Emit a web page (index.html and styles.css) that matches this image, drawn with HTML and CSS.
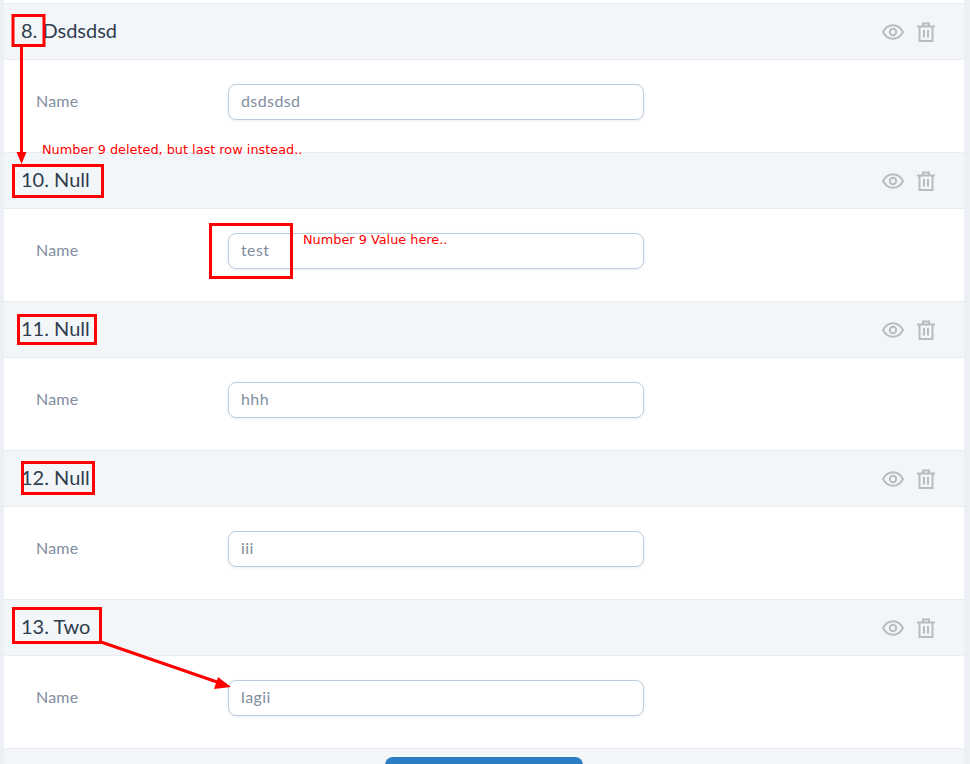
FILE: index.html
```html
<!DOCTYPE html>
<html lang="en">
<head>
<meta charset="utf-8">
<title>Rows</title>
<link rel="stylesheet" href="styles.css">
</head>
<body>
<svg width="0" height="0" class="defs">
  <symbol id="eye" viewBox="0 0 22 16"><path d="M1 8C3.500 3.400 7 1.200 11 1.200S18.500 3.400 21 8c-2.500 4.600-6 6.800-10 6.800S3.500 12.600 1 8Z" fill="none" stroke="currentColor" stroke-width="2" stroke-linejoin="round"/><circle cx="11" cy="8" r="3.200" fill="none" stroke="currentColor" stroke-width="2"/></symbol>
  <symbol id="trash" viewBox="0 0 20 20"><path d="M1 4.500h18M7 4.500V1.500h6v3M3.500 4.500V19h13V4.500M8 8v7.500M12 8v7.500" fill="none" stroke="currentColor" stroke-width="2"/></symbol>
</svg>
<main class="panel">
  <section class="row">
    <header class="row-head"><h2>8. Dsdsdsd</h2><div class="actions"><svg class="eye"><use href="#eye"/></svg><svg class="trash"><use href="#trash"/></svg></div></header>
    <div class="row-body"><label>Name</label><div class="input">dsdsdsd</div></div>
  </section>
  <section class="row">
    <header class="row-head"><h2>10. Null</h2><div class="actions"><svg class="eye"><use href="#eye"/></svg><svg class="trash"><use href="#trash"/></svg></div></header>
    <div class="row-body"><label>Name</label><div class="input">test</div></div>
  </section>
  <section class="row">
    <header class="row-head"><h2>11. Null</h2><div class="actions"><svg class="eye"><use href="#eye"/></svg><svg class="trash"><use href="#trash"/></svg></div></header>
    <div class="row-body"><label>Name</label><div class="input">hhh</div></div>
  </section>
  <section class="row">
    <header class="row-head"><h2>12. Null</h2><div class="actions"><svg class="eye"><use href="#eye"/></svg><svg class="trash"><use href="#trash"/></svg></div></header>
    <div class="row-body"><label>Name</label><div class="input">iii</div></div>
  </section>
  <section class="row">
    <header class="row-head"><h2>13. Two</h2><div class="actions"><svg class="eye"><use href="#eye"/></svg><svg class="trash"><use href="#trash"/></svg></div></header>
    <div class="row-body"><label>Name</label><div class="input">lagii</div></div>
  </section>
  <footer class="foot"><button class="save" type="button"></button></footer>
</main>
<svg class="marks" width="970" height="764" viewBox="0 0 970 764">
  <g fill="none" stroke="#f00" stroke-width="3">
    <rect x="13" y="15.500" width="31" height="30"/>
    <rect x="13.500" y="165.500" width="89" height="31"/>
    <rect x="210.500" y="224.500" width="81" height="53"/>
    <rect x="18.500" y="315.500" width="77" height="28"/>
    <rect x="22.500" y="462.500" width="71" height="31"/>
    <rect x="13.500" y="608.500" width="87" height="34"/>
    <path d="M21.500 46V154M101 642L220 683"/>
  </g>
  <path d="M16.500 152h10l-5 12ZM231 687l-13 -10l-4 12Z" fill="#f00"/>
</svg>
<p class="note note-a">Number 9 deleted, but last row instead..</p>
<p class="note note-b">Number 9 Value here..</p>
</body>
</html>
```
FILE: styles.css
```css
html, body { margin: 0; padding: 0; }
body { width: 970px; height: 764px; overflow: hidden; background: #ecf0f4; font-family: "Lato", "Open Sans", sans-serif; position: relative; }
.defs { position: absolute; }
.panel { margin-left: 4px; width: 960px; height: 764px; padding-top: 3px; background: #fff; box-sizing: border-box; overflow: hidden; }
.row-head { height: 57px; box-sizing: border-box; background: #f3f6f9; border-top: 1px solid #e9edf2; border-bottom: 1px solid #e9edf2; display: flex; align-items: center; justify-content: space-between; padding: 0 28px 0 17px; }
.row-head h2 { margin: 0 0 3px; font-size: 20px; line-height: 24px; font-weight: 400; color: #2f3d4e; }
.actions { display: flex; align-items: center; gap: 12px; color: #b8bbc0; }
.eye { width: 22px; height: 16px; }
.trash { width: 20px; height: 20px; }
.row-body { height: 92px; box-sizing: border-box; display: flex; align-items: flex-start; padding: 24px 0 0 32px; }
.row-body label { width: 192px; font-size: 16px; line-height: 34px; letter-spacing: .2px; color: #828e9f; }
.input { width: 416px; height: 36px; box-sizing: border-box; border: 1px solid #bccbda; border-radius: 8px; padding-left: 12px; font-size: 16px; line-height: 32px; letter-spacing: .4px; color: #828e9f; box-shadow: 0 1px 3px rgba(60,80,110,.1); }
.foot { background: #f3f6f9; border-top: 1px solid #e9edf2; height: 20px; display: flex; justify-content: center; padding-top: 8px; }
.save { width: 198px; height: 20px; padding: 0; border: 0; background: #2a7dc0; border-radius: 8px; }
.marks { position: absolute; left: 0; top: 0; pointer-events: none; }
.note { position: absolute; margin: 0; color: #f00; font-family: "DejaVu Sans", sans-serif; font-size: 12.850px; line-height: 14px; white-space: nowrap; }
.note-a { left: 42px; top: 143px; }
.note-b { left: 303px; top: 233px; }
```
